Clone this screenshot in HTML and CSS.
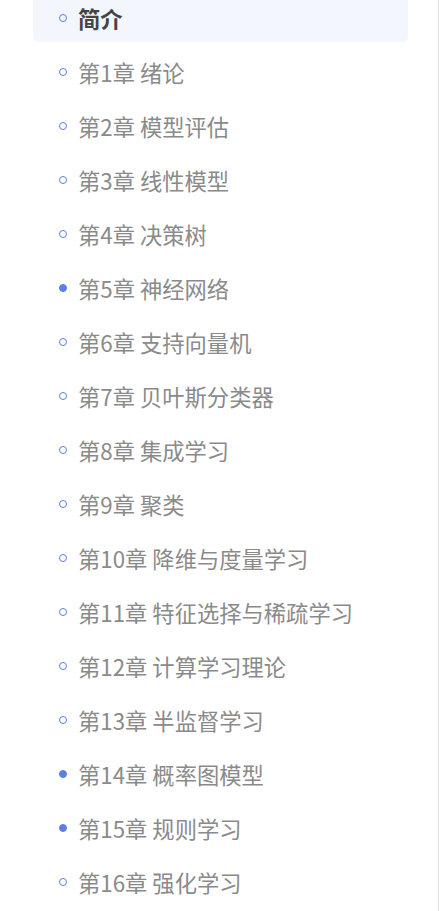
FILE: index.html
```html
<!DOCTYPE html>
<html lang="zh-CN">
<head>
    <meta charset="UTF-8">
    <meta name="viewport" content="width=device-width, initial-scale=1.0">
    <title>目录</title>
    <link rel="stylesheet" href="styles.css">
</head>
<body>

    <nav class="sidebar">
        <ul class="chapter-list">
            <li class="chapter active"><span class="dot"></span>简介</li>
            <li class="chapter"><span class="dot"></span>第1章 绪论</li>
            <li class="chapter"><span class="dot"></span>第2章 模型评估</li>
            <li class="chapter"><span class="dot"></span>第3章 线性模型</li>
            <li class="chapter"><span class="dot"></span>第4章 决策树</li>
            <li class="chapter"><span class="dot filled"></span>第5章 神经网络</li>
            <li class="chapter"><span class="dot"></span>第6章 支持向量机</li>
            <li class="chapter"><span class="dot"></span>第7章 贝叶斯分类器</li>
            <li class="chapter"><span class="dot"></span>第8章 集成学习</li>
            <li class="chapter"><span class="dot"></span>第9章 聚类</li>
            <li class="chapter"><span class="dot"></span>第10章 降维与度量学习</li>
            <li class="chapter"><span class="dot"></span>第11章 特征选择与稀疏学习</li>
            <li class="chapter"><span class="dot"></span>第12章 计算学习理论</li>
            <li class="chapter"><span class="dot"></span>第13章 半监督学习</li>
            <li class="chapter"><span class="dot filled"></span>第14章 概率图模型</li>
            <li class="chapter"><span class="dot filled"></span>第15章 规则学习</li>
            <li class="chapter"><span class="dot"></span>第16章 强化学习</li>
        </ul>
    </nav>

</body>
</html>
```

FILE: styles.css
```css
body {
    margin: 0;
    padding: 0;
    background-color: #fff;
    font-family: "Noto Sans CJK SC", "Noto Sans", sans-serif;
    overflow: hidden;
}
.sidebar {
    width: 438px;
    height: 911px;
    border-right: 1px solid #e4e4e4;
    overflow: hidden;
}
.chapter-list {
    list-style: none;
    margin: -4px 0 0 0;
    padding: 0 30px 0 33px;
}
.chapter {
    box-sizing: border-box;
    display: flex;
    align-items: center;
    height: 46px;
    margin-bottom: 8px;
    padding: 0 0 1px 26px;
    border-radius: 5px;
    font-size: 22.3px;
    line-height: 1;
    color: #8a8a8a;
    white-space: nowrap;
}
.chapter.active {
    background-color: #f3f6fd;
    color: #444;
    font-weight: bold;
}
.dot {
    box-sizing: border-box;
    width: 8px;
    height: 8px;
    margin: 0 11px 2px 0;
    border: 1.3px solid #5b7fe4;
    border-radius: 50%;
    flex-shrink: 0;
}
.dot.filled {
    background-color: #5b7fe4;
}
```
